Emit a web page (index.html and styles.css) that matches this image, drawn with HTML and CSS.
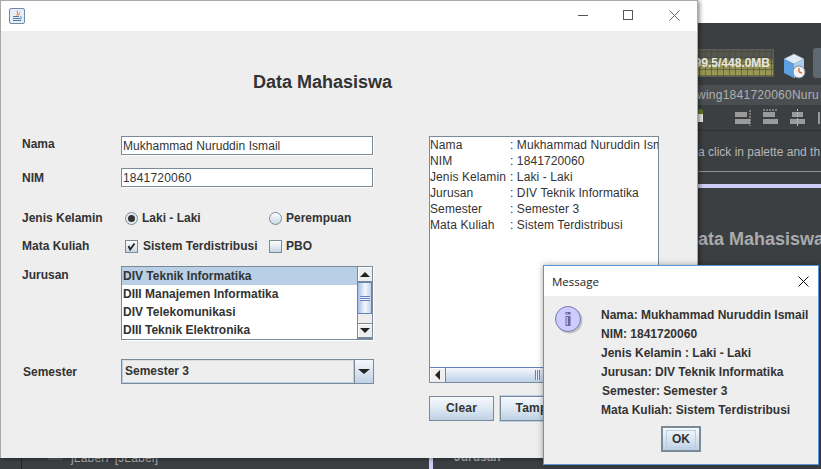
FILE: index.html
```html
<!DOCTYPE html>
<html lang="id">
<head>
<meta charset="utf-8">
<title>Data Mahasiswa</title>
<link rel="stylesheet" href="styles.css">
</head>
<body>
<div class="desktop">
  <div class="ide-top"></div>
  <div class="ide-meter"><span class="ide-meter-text">99.5/448.0MB</span></div>
  <svg class="ide-cube" width="24" height="28" viewBox="0 0 24 28">
    <path d="M2 7 L12 2 L22 7 L12 12 Z" fill="#dfeaf5" stroke="#9db4c9" stroke-width=".5"/>
    <path d="M2 7 L12 12 V26 L2 21 Z" fill="#5d9fe0"/>
    <path d="M22 7 L12 12 V26 L22 21 Z" fill="#a9cdf0"/>
    <circle cx="17" cy="20" r="6" fill="#f2f2f2" stroke="#7b8a97"/>
    <path d="M17 20 L17 16 M17 20 L20 21" stroke="#e2712a" stroke-width="1.4" fill="none"/>
  </svg>
  <div class="ide-btn"></div>
  <div class="ide-path">wing1841720060Nuru</div>
  <svg class="ide-aligns" width="124" height="18" viewBox="0 0 124 18">
    <g fill="#9a9a9a">
      <rect x="38" y="3" width="12" height="5"/><rect x="38" y="10" width="15" height="5"/>
      <rect x="66" y="3" width="12" height="5"/><rect x="66" y="10" width="15" height="5"/>
      <rect x="95" y="3" width="11" height="5"/><rect x="93" y="10" width="15" height="5"/>
      <rect x="121" y="3" width="2" height="12"/>
    </g>
    <path d="M53 1 V17 M66 1 H81 M100.500 0 V18" stroke="#bbb" stroke-dasharray="2 1" fill="none"/>
    <circle cx="3" cy="3" r="3" fill="#5f7f2a"/>
    <rect x="0" y="5" width="6" height="8" fill="#e8e8e8"/>
  </svg>
  <div class="ide-rule-a"></div>
  <div class="ide-hint">a click in palette and th</div>
  <div class="ide-rule-b"></div>
  <div class="ide-lavender"></div>
  <div class="ide-heading">ata Mahasiswa</div>
  <div class="ide-tree">jLabel7 [JLabel]</div>
  <div class="ide-tree-mark"></div>
  <div class="ide-tree-line"></div>
  <div class="ide-jurusan">Jurusan</div>
  <div class="ide-lav-bottom"></div>

  <section class="window">
    <header class="titlebar">
      <svg class="java-icon" width="16" height="16" viewBox="0 0 16 16">
        <rect x=".5" y=".5" width="15" height="15" rx="1.500" fill="#e6edf4" stroke="#6d8aa6"/>
        <path d="M9 2.500 C7 4.500 10 5.500 7.500 7.500 M10.500 4.500 C9.500 5.500 10.500 6 9.500 7.500" stroke="#e0762a" fill="none"/>
        <path d="M4 8.500 H10 M4 10.500 H11 M4 12.500 H12 M11 8.500 C13 8.500 13 11 11 11" stroke="#4f7ba6" fill="none"/>
      </svg>
      <div class="caption-btns">
        <svg width="11" height="11" viewBox="0 0 11 11"><path d="M0 5.500 H10" stroke="#555" fill="none"/></svg>
        <svg class="cap-max" width="11" height="11" viewBox="0 0 11 11"><rect x=".5" y=".5" width="9" height="9" fill="none" stroke="#555"/></svg>
        <svg width="11" height="11" viewBox="0 0 11 11"><path d="M.5 .5 L10.500 10.500 M10.500 .5 L.5 10.500" stroke="#666" fill="none"/></svg>
      </div>
    </header>
    <div class="content">
      <h1 class="heading">Data Mahasiswa</h1>
      <div class="columns">
        <form class="form">
          <div class="row row-nama"><span class="label">Nama</span><div class="field field-name">Mukhammad Nuruddin Ismail</div></div>
          <div class="row row-nim"><span class="label">NIM</span><div class="field">1841720060</div></div>
          <div class="row row-jk">
            <span class="label">Jenis Kelamin</span>
            <span class="opt opt-laki"><span class="radio radio-on"></span>Laki - Laki</span>
            <span class="opt"><span class="radio"></span>Perempuan</span>
          </div>
          <div class="row row-mk">
            <span class="label">Mata Kuliah</span>
            <span class="opt opt-sis">
              <span class="check"><svg width="11" height="11" viewBox="0 0 11 11"><path d="M2.500 5 L4.200 8.500 L8.500 2.500" stroke="#222" stroke-width="1.800" fill="none"/></svg></span>Sistem Terdistribusi</span>
            <span class="opt"><span class="check"></span>PBO</span>
          </div>
          <div class="row row-jur">
            <span class="label label-top">Jurusan</span>
            <div class="list">
              <ul class="list-items">
                <li class="list-item selected">DIV Teknik Informatika</li>
                <li class="list-item">DIII Manajemen Informatika</li>
                <li class="list-item">DIV Telekomunikasi</li>
                <li class="list-item">DIII Teknik Elektronika</li>
              </ul>
              <div class="vscroll">
                <span class="sb-btn"><span class="tri-up"></span></span>
                <span class="sb-thumb"><span class="grip"></span></span>
                <span class="sb-track"></span>
                <span class="sb-btn sb-btn-down"><span class="tri-down"></span></span>
              </div>
            </div>
          </div>
          <div class="row row-sem">
            <span class="label label-sem">Semester</span>
            <div class="combo">
              <span class="combo-value">Semester 3</span>
              <span class="combo-btn"><span class="tri-down tri-big"></span></span>
            </div>
          </div>
        </form>
        <div class="side">
          <div class="textarea">
            <div class="text-view">
              <div class="line"><span class="key">Nama</span>: Mukhammad Nuruddin Ismail</div>
              <div class="line"><span class="key">NIM</span>: 1841720060</div>
              <div class="line"><span class="key">Jenis Kelamin</span>: Laki - Laki</div>
              <div class="line"><span class="key">Jurusan</span>: DIV Teknik Informatika</div>
              <div class="line"><span class="key">Semester</span>: Semester 3</div>
              <div class="line"><span class="key">Mata Kuliah</span>: Sistem Terdistribusi</div>
            </div>
            <div class="hscroll">
              <span class="hs-btn"><span class="tri-left"></span></span>
              <span class="hs-thumb"><span class="hs-grip"></span></span>
            </div>
          </div>
          <div class="actions">
            <button type="button" class="btn btn-clear">Clear</button>
            <button type="button" class="btn btn-tampil">Tampil</button>
          </div>
        </div>
      </div>
    </div>
  </section>

  <section class="dialog">
    <header class="dlg-title">
      <span class="dlg-name">Message</span>
      <svg width="11" height="11" viewBox="0 0 11 11"><path d="M.5 .5 L10.500 10.500 M10.500 .5 L.5 10.500" stroke="#111" fill="none"/></svg>
    </header>
    <div class="dlg-body">
      <div class="dlg-main">
        <svg class="info" width="30" height="30" viewBox="0 0 30 30">
          <circle cx="14.500" cy="14.500" r="13" fill="#000" opacity=".18"/>
          <circle cx="13" cy="13" r="12.500" fill="#ccccff" stroke="#7a76ad"/>
          <path d="M10.500 6 H15.500 V8.500 H10.500 Z M10.500 10 H15.500 V20 H10.500 Z" fill="#66669a"/>
          <path d="M11.500 6.800 H12.800 V7.800 H11.500 Z M11.500 11 H12.800 V19 H11.500 Z" fill="#ccccff"/>
        </svg>
        <div class="dlg-text">
          <div class="dlg-line">Nama: Mukhammad Nuruddin Ismail</div>
          <div class="dlg-line">NIM: 1841720060</div>
          <div class="dlg-line">Jenis Kelamin : Laki - Laki</div>
          <div class="dlg-line">Jurusan: DIV Teknik Informatika</div>
          <div class="dlg-line dlg-sem">Semester: Semester 3</div>
          <div class="dlg-line">Mata Kuliah: Sistem Terdistribusi</div>
        </div>
      </div>
      <div class="dlg-actions"><button type="button" class="btn-ok"><span class="ok-inner">OK</span></button></div>
    </div>
  </section>
</div>
</body>
</html>
```
FILE: styles.css
```css
* { box-sizing: border-box; }
html, body { margin: 0; padding: 0; }
body { width: 821px; height: 469px; overflow: hidden; font-family: "Liberation Sans", Arial, sans-serif; }

.desktop { position: relative; width: 821px; height: 469px; background: #3c3f41; overflow: hidden; }

/* IDE behind the windows */
.ide-top { position: absolute; left: 690px; top: 0; width: 131px; height: 23px; background: #fff; }
.ide-meter { position: absolute; left: 680px; top: 49px; width: 94px; height: 28px; border: 1px solid #5d5d58; overflow: hidden;
  background:
    repeating-linear-gradient(90deg, rgba(70,70,60,.55) 0 1px, transparent 1px 6px),
    repeating-linear-gradient(0deg, rgba(70,70,60,.55) 0 1px, transparent 1px 6px),
    linear-gradient(180deg, #55564e 0 30%, #8c8c55 50%, #9d9a52 100%); }
.ide-meter-text { position: absolute; left: 0; top: 6px; width: 89px; text-align: right; font-size: 12px; font-weight: 700; color: #e8e8e0; white-space: nowrap; }
.ide-cube { position: absolute; left: 782px; top: 52px; }
.ide-btn { position: absolute; left: 813px; top: 48px; width: 20px; height: 30px; border-radius: 3px; background: #5e6870; }
.ide-path { position: absolute; left: 690px; top: 85px; width: 131px; height: 20px; padding-left: 7px; background: #4b4e50; color: #aeb0b2; font-size: 12px; line-height: 20px; letter-spacing: .25px; white-space: nowrap; overflow: hidden; }
.ide-aligns { position: absolute; left: 697px; top: 109px; }
.ide-rule-a { position: absolute; left: 690px; top: 130px; width: 131px; height: 1px; background: #2f3133; }
.ide-hint { position: absolute; left: 698px; top: 144px; width: 123px; height: 16px; color: #b5b7b9; font-size: 12px; line-height: 16px; white-space: nowrap; overflow: hidden; }
.ide-rule-b { position: absolute; left: 690px; top: 171px; width: 131px; height: 1px; background: #8e9092; }
.ide-lavender { position: absolute; left: 690px; top: 184px; width: 131px; height: 4px; background: #ccccf5; }
.ide-heading { position: absolute; left: 698px; top: 228px; color: #a9abad; font-size: 18px; line-height: 22px; font-weight: 700; white-space: nowrap; }
.ide-tree { position: absolute; left: 71px; top: 450px; color: #a9abad; font-size: 12px; line-height: 16px; letter-spacing: .2px; white-space: nowrap; }
.ide-tree-mark { position: absolute; left: 48px; top: 457px; width: 15px; height: 3px; background: #55585a; }
.ide-tree-line { position: absolute; left: 21px; top: 450px; width: 1px; height: 19px; background: #222; }
.ide-jurusan { position: absolute; left: 454px; top: 449px; color: #a9abad; font-size: 12px; line-height: 16px; font-weight: 700; white-space: nowrap; }
.ide-lav-bottom { position: absolute; left: 429px; top: 455px; width: 4px; height: 14px; background: #ccccf5; }

/* Java frame */
.window { position: absolute; left: 0; top: 0; width: 698px; height: 458px; display: flex; flex-direction: column; background: #eee; border: 1px solid #a8a8a8; border-bottom: 0; box-shadow: 2px 1px 4px rgba(0,0,0,.4); }
.titlebar { flex: none; height: 30px; display: flex; align-items: center; justify-content: space-between; padding-left: 8px; background: #fff; }
.java-icon { display: block; margin-top: -1px; }
.caption-btns { display: flex; gap: 34px; padding-right: 17px; margin-top: -1px; }
.caption-btns svg { display: block; }
.caption-btns .cap-max { margin-right: 1px; }
.content { flex: 1; padding: 40px 0 0 21px; background: #eee; color: #333; }
.heading { margin: 0 0 0 231px; font-size: 18px; line-height: 22px; font-weight: 700; color: #333; }
.columns { display: flex; margin-top: 43px; }

.form { flex: none; width: 407px; }
.row { display: flex; align-items: center; font-size: 12px; font-weight: 700; color: #333; }
.label { flex: none; width: 99px; }
.label-top { align-self: flex-start; padding-top: 2px; }
.label-sem { padding-left: 1px; }
.row-nama { height: 19px; }
.row-nama .label { margin-top: -3px; }
.row-nim { height: 19px; margin-top: 13px; }
.row-jk { height: 18px; margin-top: 22px; }
.row-mk { height: 18px; margin-top: 10px; }
.row-jur { height: 74px; margin-top: 11px; }
.row-sem { height: 25px; margin-top: 19px; }

.field { width: 252px; height: 19px; padding-left: 1px; background: #fff; border: 1px solid #7a8a99; box-shadow: 1px 1px 0 #fff; font-weight: 400; font-size: 12px; line-height: 18px; color: #333; letter-spacing: .2px; }
.field-name { letter-spacing: .05px; }

.opt { display: flex; align-items: center; gap: 4px; }
.opt-laki { width: 148px; padding-left: 4px; }
.opt-sis { width: 148px; padding-left: 4px; gap: 5px; }
.radio { width: 13px; height: 13px; border-radius: 50%; border: 1px solid #7a8a99; background: linear-gradient(180deg, #fff, #c7d6e5); flex: none; position: relative; }
.radio-on { background: #e4e9ee; }
.radio-on::after { content: ""; position: absolute; left: 2px; top: 2px; width: 7px; height: 7px; border-radius: 50%; background: #333; }
.check { width: 13px; height: 13px; border: 1px solid #7a8a99; background: linear-gradient(180deg, #fff, #c7d6e5); flex: none; display: block; }
.check svg { display: block; }

.list { display: flex; width: 252px; height: 74px; border: 1px solid #7a8a99; box-shadow: 1px 1px 0 #fff; background: #fff; }
.list-items { flex: 1; list-style: none; margin: 0; padding: 0; overflow: hidden; }
.list-item { height: 18px; line-height: 18px; padding-left: 1px; white-space: nowrap; }
.selected { background: #b8cfe5; }
.vscroll { flex: none; width: 15px; display: flex; flex-direction: column; border-left: 1px solid #7a8a99; background: #eee; }
.sb-btn { flex: none; height: 15px; display: flex; align-items: center; justify-content: center; background: #eee; border-bottom: 1px solid #7a8a99; box-shadow: inset 1px 1px 0 #fff; }
.sb-btn-down { border-bottom: 2px solid #7a8a99; border-top: 1px solid #7a8a99; height: 16px; }
.sb-thumb { flex: none; height: 32px; display: flex; align-items: center; justify-content: center; margin-left: -1px; border: 1px solid #6382bf; background: linear-gradient(90deg, #a3bfe6, #f4f8fc 55%, #c0d3e9); }
.grip { width: 10px; height: 5px; background: repeating-linear-gradient(180deg, #6382bf 0 1px, #eef 1px 2px); }
.sb-track { flex: 1; }

.tri-up { width: 0; height: 0; border-left: 5px solid transparent; border-right: 5px solid transparent; border-bottom: 5px solid #222; }
.tri-down { width: 0; height: 0; border-left: 5px solid transparent; border-right: 5px solid transparent; border-top: 5px solid #222; }
.tri-big { border-left-width: 6px; border-right-width: 6px; border-top-width: 5px; }
.tri-left { width: 0; height: 0; border-top: 5px solid transparent; border-bottom: 5px solid transparent; border-right: 5px solid #222; }

.combo { display: flex; width: 253px; height: 25px; border: 1px solid #7a8a99; background: #eee; }
.combo-value { flex: 1; padding-left: 2px; line-height: 21px; border: 1px solid #fff; border-color: #d8dde3 #b8cfe5 #b8cfe5 #b8cfe5; margin-right: 0; background: #eee; }
.combo-btn { flex: none; width: 19px; display: flex; align-items: center; justify-content: center; border-left: 1px solid #7a8a99; background: linear-gradient(180deg, #f5f8fb, #c0d2e6); }

.side { flex: none; width: 230px; }
.textarea { width: 230px; height: 247px; display: flex; flex-direction: column; background: #fff; border: 1px solid #7a8a99; border-bottom: 0; }
.text-view { flex: 1; overflow: hidden; font-size: 12px; line-height: 16px; color: #333; white-space: nowrap; }
.line { display: flex; height: 16px; letter-spacing: .1px; }
.key { flex: none; width: 80px; }
.hscroll { flex: none; height: 16px; display: flex; border-top: 1px solid #6382bf; border-bottom: 1px solid #7a8a99; background: #eee; }
.hs-btn { flex: none; width: 16px; display: flex; align-items: center; justify-content: center; border-right: 1px solid #6382bf; box-shadow: inset 1px 1px 0 #fff; }
.hs-thumb { flex: 1; display: flex; align-items: center; padding-left: 89px; background: linear-gradient(180deg, #f4f8fc, #bcd0e8); }
.hs-grip { width: 5px; height: 10px; background: repeating-linear-gradient(90deg, #6382bf 0 1px, #eef 1px 2px); }
.actions { display: flex; gap: 6px; margin-top: 13px; }
.btn { height: 25px; padding: 0; border: 1px solid #7a8a99; background: linear-gradient(180deg, #f6f9fc, #dde8f2 50%, #bed1e4); font: 700 12px/23px "Liberation Sans", Arial, sans-serif; letter-spacing: .2px; color: #333; }
.btn-clear { width: 65px; }
.btn-tampil { width: 70px; box-shadow: 0 0 0 1px #b8cfe5; }

/* Message dialog */
.dialog { position: absolute; left: 543px; top: 265px; width: 276px; height: 200px; display: flex; flex-direction: column; background: #eee; border: 1px solid #5b95d6; box-shadow: 0 0 6px rgba(0,0,0,.35); }
.dlg-title { flex: none; height: 30px; display: flex; align-items: center; justify-content: space-between; padding: 0 9px 0 8px; background: #fff; }
.dlg-title svg { display: block; }
.dlg-name { font-family: "Open Sans", "Noto Sans", sans-serif; font-size: 11.5px; color: #222; }
.dlg-body { flex: 1; padding: 10px 0 0 11px; }
.dlg-main { display: flex; }
.info { flex: none; display: block; }
.dlg-text { margin-left: 16px; font-size: 12px; font-weight: 700; color: #333; }
.dlg-line { height: 19px; line-height: 19px; white-space: pre; }
.dlg-sem { padding-left: 1px; }
.dlg-actions { display: flex; margin-top: 6px; padding-left: 106px; }
.btn-ok { width: 40px; height: 26px; padding: 2px; border: 2px solid #7a8a99; background: linear-gradient(180deg, #f6f9fc, #bed1e4); font: 700 12px/18px "Liberation Sans", Arial, sans-serif; color: #333; }
.ok-inner { display: block; height: 18px; border: 1px solid #b8cfe5; line-height: 17px; margin: 0 1px; }
```
